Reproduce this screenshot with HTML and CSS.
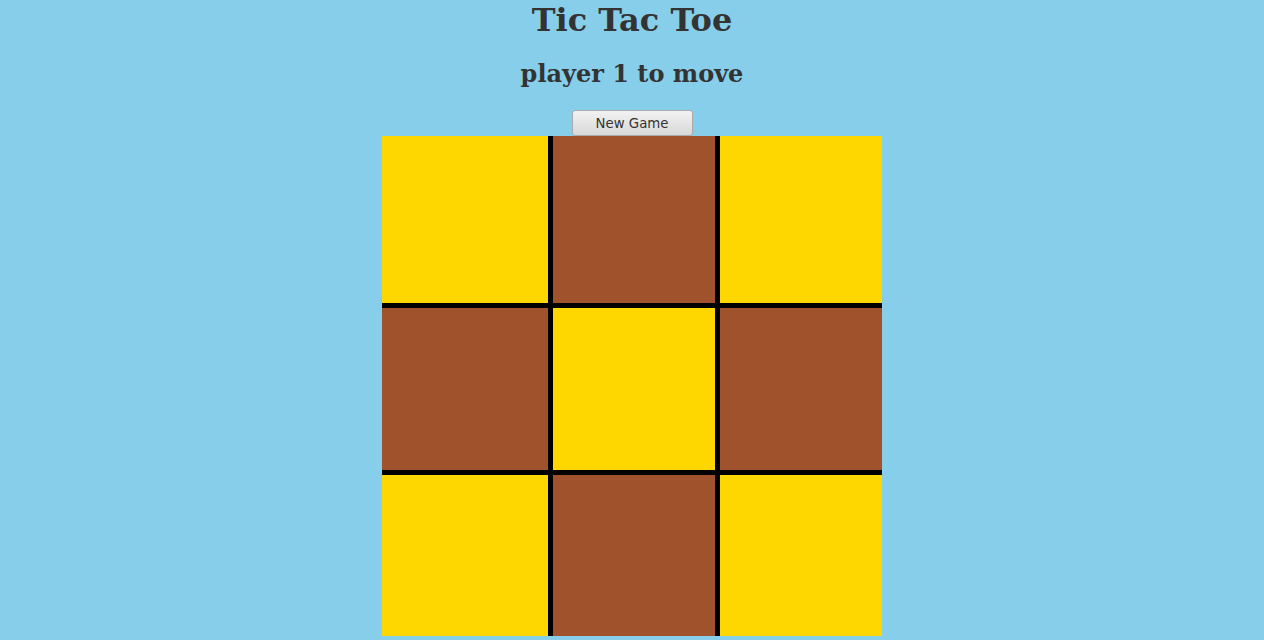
FILE: index.html
```html
<!DOCTYPE html>
<html lang="en">
<head>
<meta charset="UTF-8">
<meta name="viewport" content="width=device-width, initial-scale=1.0">
<title>Tic Tac Toe</title>
<link rel="stylesheet" href="styles.css">
</head>
<body>

<h1 class="title">Tic Tac Toe</h1>
<h2 class="status">player 1 to move</h2>
<button class="new-game">New Game</button>

<div class="board">
  <div class="cell light"></div>
  <div class="cell dark"></div>
  <div class="cell light"></div>
  <div class="cell dark"></div>
  <div class="cell light"></div>
  <div class="cell dark"></div>
  <div class="cell light"></div>
  <div class="cell dark"></div>
  <div class="cell light"></div>
</div>

</body>
</html>
```

FILE: styles.css
```css
body {
  margin: 0;
  background-color: #87ceeb;
  text-align: center;
  font-family: "DejaVu Serif", serif;
  color: #333;
}

.title {
  margin: 0;
  padding-top: 1px;
  font-size: 32px;
}

.status {
  margin: 20px 0 22px;
  font-size: 24px;
}

.new-game {
  display: block;
  margin: 0 auto;
  width: 121px;
  height: 26px;
  padding: 0;
  font-family: "DejaVu Sans", sans-serif;
  font-size: 13.33px;
  color: #333;
  background: linear-gradient(#f2f2f2, #d8d8d8);
  border: 1px solid #aaa;
  border-radius: 3px;
}

.board {
  display: grid;
  grid-template-columns: 166px 162px 162px;
  grid-template-rows: 167px 162px 161px;
  gap: 5px;
  width: 500px;
  margin: 0 auto;
  background-color: #000;
}

.cell.light {
  background-color: #ffd700;
}

.cell.dark {
  background-color: #a0522d;
}
```
